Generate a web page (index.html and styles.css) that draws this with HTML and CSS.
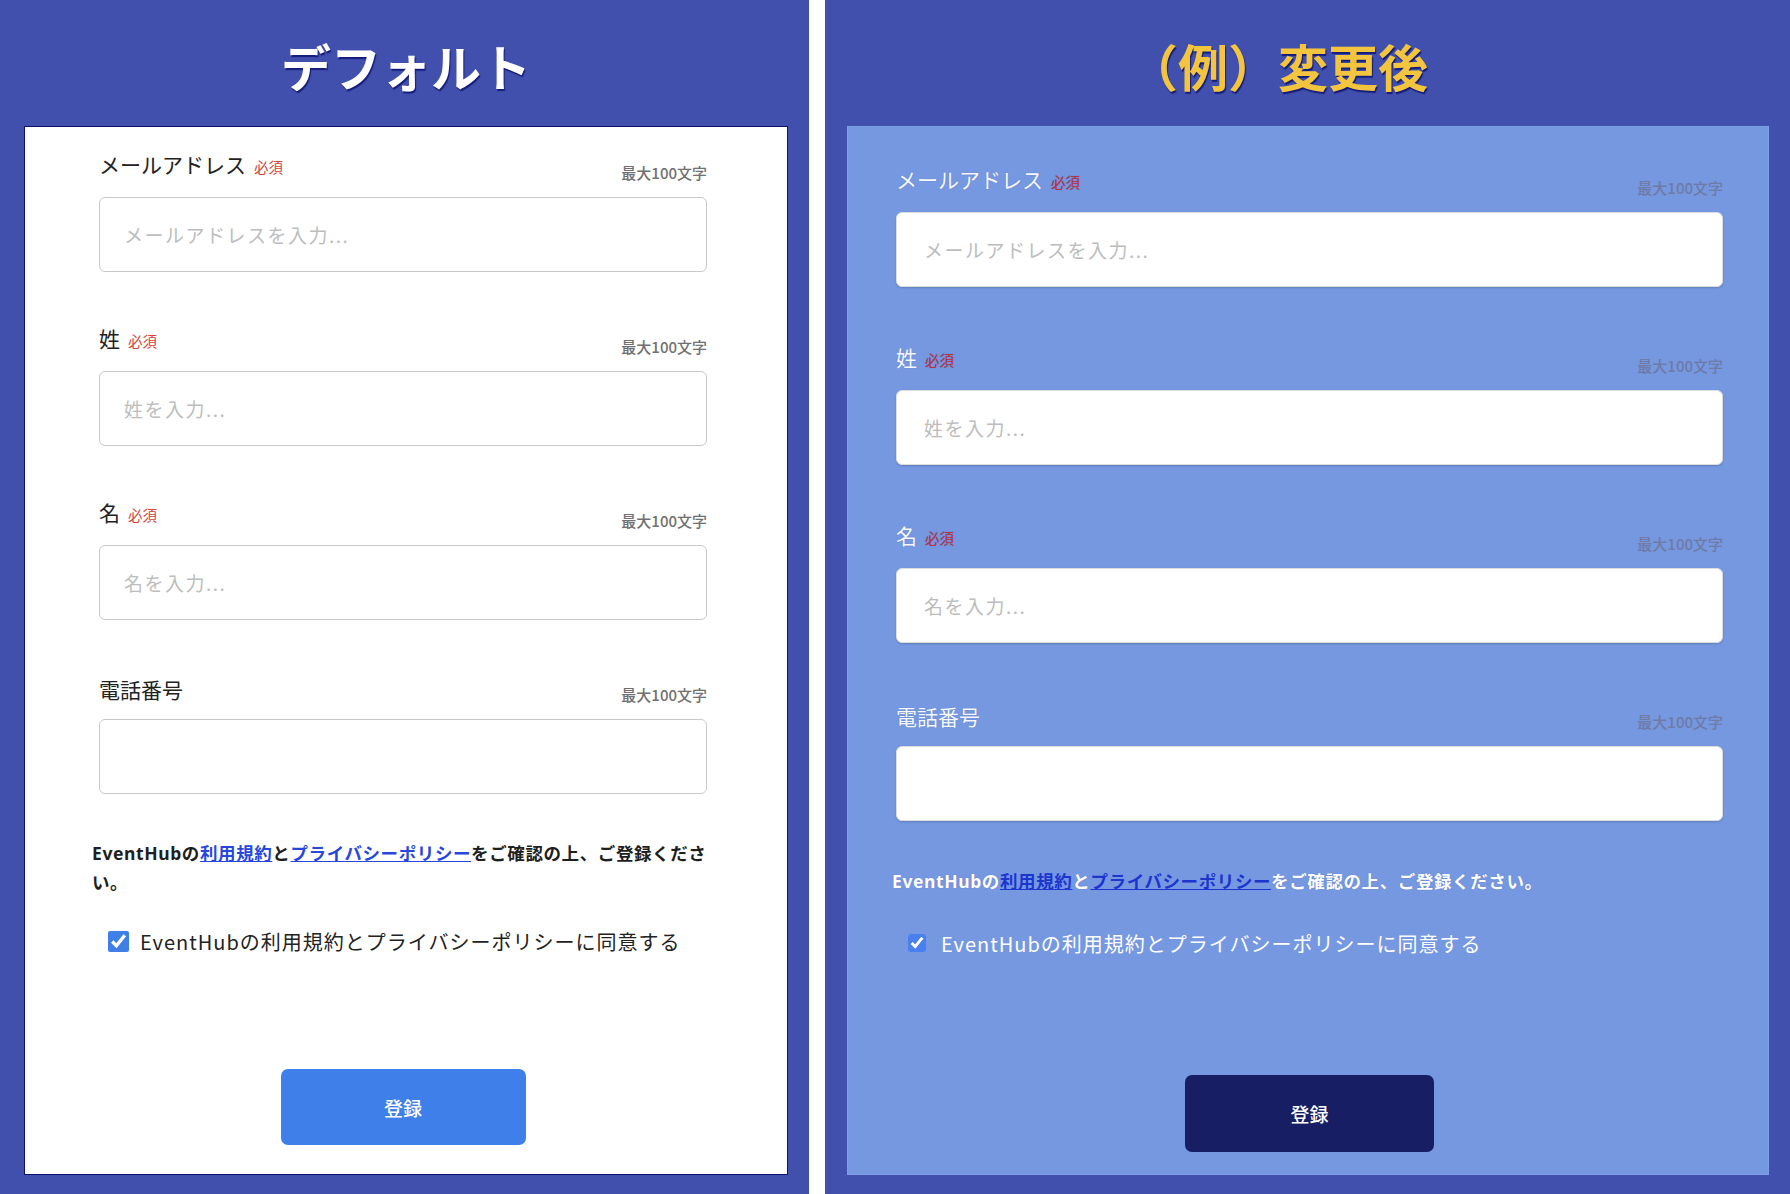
FILE: index.html
```html
<!DOCTYPE html>
<html lang="ja">
<head>
  <meta charset="UTF-8">
  <title>EventHub 登録フォーム</title>
  <link rel="stylesheet" href="styles.css">
</head>

<body>
  <div class="panel">
    <h1 class="panel-title">デフォルト</h1>

    <form class="signup-card">
      <div class="field">
        <div class="field-head">
          <label>メールアドレス<span class="required">必須</span></label>
          <span class="max-hint">最大100文字</span>
        </div>
        <input type="text" class="text-input" placeholder="メールアドレスを入力...">
      </div>

      <div class="field">
        <div class="field-head">
          <label>姓<span class="required">必須</span></label>
          <span class="max-hint">最大100文字</span>
        </div>
        <input type="text" class="text-input" placeholder="姓を入力...">
      </div>

      <div class="field">
        <div class="field-head">
          <label>名<span class="required">必須</span></label>
          <span class="max-hint">最大100文字</span>
        </div>
        <input type="text" class="text-input" placeholder="名を入力...">
      </div>

      <div class="field">
        <div class="field-head">
          <label>電話番号</label>
          <span class="max-hint">最大100文字</span>
        </div>
        <input type="text" class="text-input">
      </div>

      <p class="terms">EventHubの<a href="#">利用規約</a>と<a href="#">プライバシーポリシー</a>をご確認の上、ご登録ください。</p>

      <label class="agree">
        <input type="checkbox" checked>
        <span>EventHubの利用規約とプライバシーポリシーに同意する</span>
      </label>

      <button type="button" class="submit-button">登録</button>
    </form>
  </div>

  <div class="divider"></div>

  <div class="panel custom">
    <h1 class="panel-title">（例）変更後</h1>

    <form class="signup-card">
      <div class="field">
        <div class="field-head">
          <label>メールアドレス<span class="required">必須</span></label>
          <span class="max-hint">最大100文字</span>
        </div>
        <input type="text" class="text-input" placeholder="メールアドレスを入力...">
      </div>

      <div class="field">
        <div class="field-head">
          <label>姓<span class="required">必須</span></label>
          <span class="max-hint">最大100文字</span>
        </div>
        <input type="text" class="text-input" placeholder="姓を入力...">
      </div>

      <div class="field">
        <div class="field-head">
          <label>名<span class="required">必須</span></label>
          <span class="max-hint">最大100文字</span>
        </div>
        <input type="text" class="text-input" placeholder="名を入力...">
      </div>

      <div class="field">
        <div class="field-head">
          <label>電話番号</label>
          <span class="max-hint">最大100文字</span>
        </div>
        <input type="text" class="text-input">
      </div>

      <p class="terms">EventHubの<a href="#">利用規約</a>と<a href="#">プライバシーポリシー</a>をご確認の上、ご登録ください。</p>

      <label class="agree">
        <input type="checkbox" checked>
        <span>EventHubの利用規約とプライバシーポリシーに同意する</span>
      </label>

      <button type="button" class="submit-button">登録</button>
    </form>
  </div>
</body>
</html>
```

FILE: styles.css
```css
*
{
  box-sizing: border-box;
}
body
{
  margin: 0;
  display: flex;
  height: 1194px;
  background-color: #ffffff;
  font-family: "Noto Sans CJK JP", "Noto Sans", sans-serif;
  color: #222;
}

/* --- panels --- */
.panel
{
  width: 809px;
  display: flex;
  flex-direction: column;
  padding: 0 21px 19px 24px;
  background-color: #414fad;
}
.panel.custom
{
  width: auto;
  flex: 1;
  padding: 0 21px 19px 22px;
}
.divider
{
  width: 16px;
  background-color: #ffffff;
}
.panel-title
{
  margin: 0;
  height: 126px;
  padding-top: 40px;
  font-size: 50px;
  line-height: 50px;
  font-weight: bold;
  text-align: center;
  color: #ffffff;
  text-shadow: 1px 2px 1px #141c78;
}
.custom .panel-title
{
  padding-right: 60px;
  color: #f3c53f;
}

/* --- form card --- */
.signup-card
{
  flex: 1;
  display: flex;
  flex-direction: column;
  padding: 25px 80px 0 74px;
  background-color: #ffffff;
  border: 1px solid #0b1270;
}
.custom .signup-card
{
  padding: 40px 45px 0 48px;
  background-color: #7598e0;
  border: 1px solid #7f9fe4;
}

.field + .field
{
  margin-top: 54px;
}
.custom .field + .field
{
  margin-top: 58px;
}
.field-head
{
  display: flex;
  justify-content: space-between;
  align-items: flex-end;
  height: 30px;
  margin-bottom: 15px;
}
.field-head label
{
  font-size: 21px;
  line-height: 30px;
  color: #222;
}
.custom .field-head label
{
  color: #f7f8fc;
  text-shadow: 0 0 1px rgba(40, 60, 130, 0.4);
}
.required
{
  margin-left: 8px;
  font-size: 14.5px;
  color: #d2453d;
}
.custom .required
{
  color: #b8323e;
}
.max-hint
{
  font-size: 15px;
  line-height: 19px;
  font-weight: 500;
  color: #707070;
}
.custom .max-hint
{
  color: #6f7aa6;
}

.text-input
{
  display: block;
  width: 100%;
  height: 75px;
  padding: 0 24px;
  border: 1.5px solid #c9c9c9;
  border-radius: 6px;
  background-color: #ffffff;
  font-family: inherit;
  font-size: 19px;
  letter-spacing: 1.5px;
  color: #222;
}
.custom .text-input
{
  padding: 0 27px;
  border: 1px solid #dcdcdc;
  box-shadow: 0 1px 2px rgba(0, 0, 0, 0.18);
}
.text-input::placeholder
{
  color: #bdbdbd;
}

/* --- terms and agreement --- */
.terms
{
  margin: 45px -6px 0 -7px;
  font-family: "Noto Sans", "Noto Sans CJK JP", sans-serif;
  font-size: 17.5px;
  line-height: 29px;
  letter-spacing: 0.6px;
  font-weight: bold;
  color: #1e1e1e;
}
.custom .terms
{
  margin: 46px 0 0 -4px;
  color: #ffffff;
  text-shadow: 0 0 1px rgba(40, 60, 130, 0.4);
}
.terms a
{
  color: #2747dc;
  text-decoration: underline;
}
.custom .terms a
{
  color: #1c35cf;
  text-shadow: none;
}

.agree
{
  display: flex;
  align-items: center;
  gap: 11px;
  height: 30px;
  margin-top: 29px;
  padding-left: 9px;
  font-size: 20px;
  letter-spacing: 1px;
  color: #222;
}
.custom .agree
{
  gap: 15px;
  margin-top: 32px;
  padding-left: 12px;
  color: #ffffff;
}
.agree input
{
  width: 21px;
  height: 21px;
  margin: 0;
  accent-color: #3f7fe6;
}
.custom .agree input
{
  width: 18px;
  height: 18px;
  accent-color: #4a80ee;
}

/* --- submit --- */
.submit-button
{
  align-self: center;
  width: 245px;
  height: 76px;
  margin-top: 113px;
  border: none;
  border-radius: 7px;
  background-color: #3f7fe9;
  font-family: inherit;
  font-size: 19px;
  font-weight: 500;
  color: #ffffff;
  cursor: pointer;
}
.custom .submit-button
{
  width: 249px;
  height: 77px;
  margin-top: 117px;
  background-color: #181e63;
}
```
